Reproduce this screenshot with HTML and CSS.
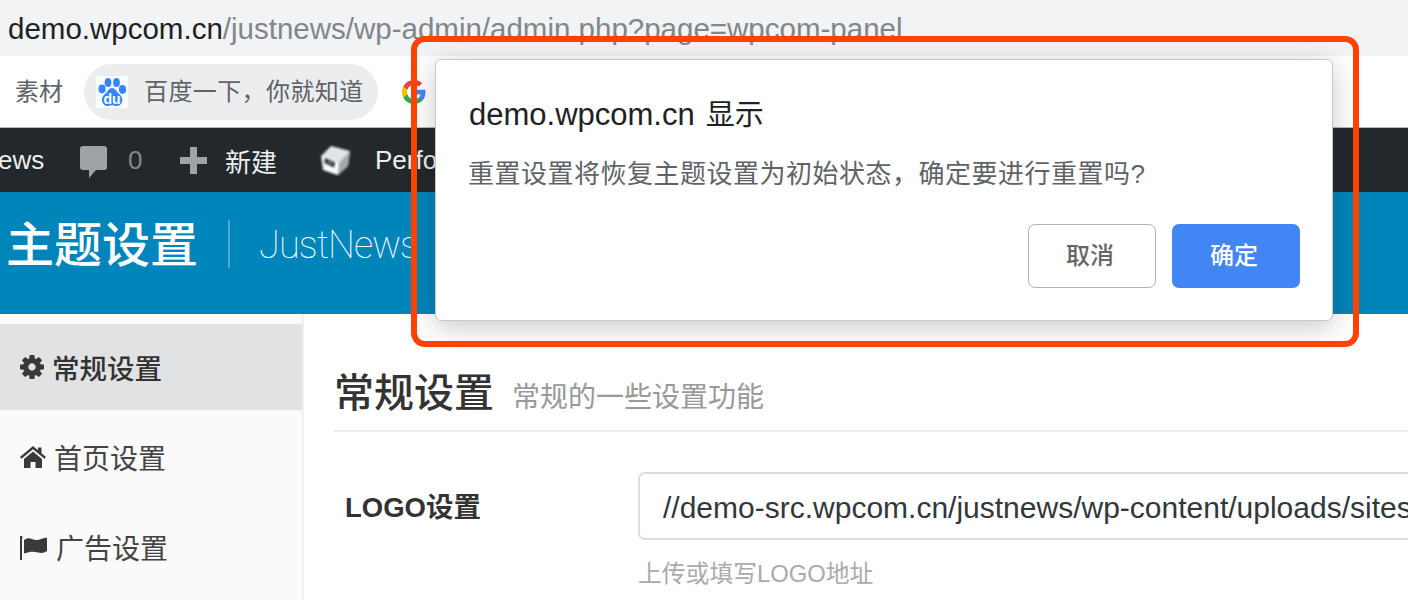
FILE: index.html
```html
<!DOCTYPE html>
<html lang="zh">
<head>
<meta charset="utf-8">
<title>主题设置</title>
<link rel="stylesheet" href="styles.css">
</head>
<body>
<div class="url-bar"><span class="host">demo.wpcom.cn</span><span class="path">/justnews/wp-admin/admin.php?page=wpcom-panel</span></div>
<div class="bookmarks">
  <span class="bm-text">素材</span>
  <div class="pill">
    <span class="baidu"><svg viewBox="0 0 32 32" width="32" height="32"><rect width="32" height="32" fill="#fff"/><g fill="#3388ff"><ellipse cx="6" cy="13" rx="3.600" ry="4.400"/><ellipse cx="12" cy="6.500" rx="3.400" ry="4.500"/><ellipse cx="20.500" cy="6.500" rx="3.400" ry="4.500"/><ellipse cx="26.500" cy="13.500" rx="3.600" ry="4.400"/><path d="M16 12c-3 0-4 3-6 5-2 2-4.500 4-4 7.500C6.500 28 9.500 30.500 12 30c2-.4 2.500-.8 4-.8s2 .4 4 .8c2.800.5 6-2 6.300-5.500.4-3.500-2-5.500-4-7.500-2-2-3.300-5-6.300-5z"/></g><text x="16" y="27.500" class="du">du</text></svg></span>
    <span class="pill-text">百度一下，你就知道</span>
  </div>
  <svg class="google" viewBox="0 0 24 24" width="24" height="24"><path fill="#4285f4" d="M23.500 12.300c0-.9-.1-1.700-.2-2.500H12v4.700h6.500c-.3 1.500-1.100 2.700-2.400 3.600v3h3.900c2.300-2.100 3.500-5.200 3.500-8.800z"/><path fill="#34a853" d="M12 24c3.200 0 6-1.100 8-2.900l-3.900-3c-1.100.7-2.500 1.200-4.100 1.200-3.100 0-5.800-2.100-6.700-5H1.300v3.100C3.300 21.300 7.300 24 12 24z"/><path fill="#fbbc05" d="M5.300 14.300c-.5-1.500-.5-3.100 0-4.600V6.600h-4a12 12 0 0 0 0 10.800z"/><path fill="#ea4335" d="M12 4.800c1.800 0 3.300.6 4.600 1.800L20 3.200C17.900 1.200 15.200 0 12 0 7.300 0 3.300 2.700 1.300 6.600l4 3.100c.9-2.800 3.600-4.900 6.700-4.900z"/></svg>
</div>
<div class="admin-bar">
  <span class="ab-site">ews</span>
  <svg class="ab-bubble" viewBox="0 0 27 32" width="27" height="32"><path fill="#9ea3a8" d="M3 0h21a3 3 0 0 1 3 3v18a3 3 0 0 1-3 3h-8l-7 8v-8H3a3 3 0 0 1-3-3V3a3 3 0 0 1 3-3z"/></svg>
  <span class="ab-count">0</span>
  <svg class="ab-plus" viewBox="0 0 27 27" width="27" height="27"><path fill="#9ea3a8" d="M10 0h7v10h10v7H17v10h-7V17H0v-7h10z"/></svg>
  <span class="ab-new">新建</span>
  <svg class="ab-cube" viewBox="0 0 32 32" width="32" height="32"><path fill="#e4e4e4" d="M11 2l19 5-2 15-10 9-15-5L1 12z"/><path fill="#fafafa" d="M2 12l17 7-1 12-14-5z"/><path fill="#a8a8a8" d="M19 19l11-12-2 15-10 9z"/><path fill="#1e2226" d="M5 14l10 4.500-1 5L4.500 19z"/><path fill="#9a9a9a" d="M7 16.500l6 2.700-.3 1.500-5.700-2.500z"/></svg>
  <span class="ab-perf">Performance</span>
</div>
<header class="banner">
  <h1 class="banner-title">主题设置</h1>
  <span class="banner-name">JustNews</span>
</header>
<div class="layout">
  <nav class="sidebar">
    <a class="nav-item active"><svg class="ni-icon" viewBox="-12 -12 24 24" width="24" height="24"><g fill="#3a3a3a"><circle r="6.200" fill="none" stroke="#3a3a3a" stroke-width="5"/><path d="M-3-7.500L-2.300-12H2.300L3-7.500Z"/><path transform="rotate(45)" d="M-3-7.500L-2.300-12H2.300L3-7.500Z"/><path transform="rotate(90)" d="M-3-7.500L-2.300-12H2.300L3-7.500Z"/><path transform="rotate(135)" d="M-3-7.500L-2.300-12H2.300L3-7.500Z"/><path transform="rotate(180)" d="M-3-7.500L-2.300-12H2.300L3-7.500Z"/><path transform="rotate(225)" d="M-3-7.500L-2.300-12H2.300L3-7.500Z"/><path transform="rotate(270)" d="M-3-7.500L-2.300-12H2.300L3-7.500Z"/><path transform="rotate(315)" d="M-3-7.500L-2.300-12H2.300L3-7.500Z"/></g></svg><span>常规设置</span></a>
    <a class="nav-item"><svg class="ni-icon" viewBox="0 0 26 22" width="26" height="22"><path fill="#3a3a3a" d="M13 0l5 4.300V1.500h3.500v5.800L26 11l-1.500 1.800L13 3.300 1.500 12.800 0 11zM4 13l9-7.500 9 7.500v9h-6.500v-6h-5v6H4z"/></svg><span>首页设置</span></a>
    <a class="nav-item"><svg class="ni-icon flag" viewBox="0 0 28 24" width="28" height="24"><path fill="#3a3a3a" d="M1 0a1.500 1.500 0 0 1 1 2.700V24H0V2.700A1.500 1.500 0 0 1 1 0zM4 4c3-2 5-2 8-1s5 1.500 9 0 6-1.500 6-1v13c-3 2-5 2.500-9 1.500s-7-1.500-14 1z"/></svg><span>广告设置</span></a>
  </nav>
  <main class="content">
    <div class="heading"><h2 class="heading-title">常规设置</h2><span class="heading-sub">常规的一些设置功能</span></div>
    <div class="field">
      <label class="field-label">LOGO设置</label>
      <div class="field-body">
        <div class="input">//demo-src.wpcom.cn/justnews/wp-content/uploads/sites/3/2019/logo.png</div>
        <p class="hint">上传或填写LOGO地址</p>
      </div>
    </div>
  </main>
</div>
<div class="dialog">
  <div class="dialog-title"><span class="dialog-host">demo.wpcom.cn</span> 显示</div>
  <div class="dialog-msg">重置设置将恢复主题设置为初始状态，确定要进行重置吗?</div>
  <div class="dialog-actions">
    <button class="btn btn-cancel">取消</button>
    <button class="btn btn-ok">确定</button>
  </div>
</div>
<div class="red-frame"></div>
</body>
</html>
```
FILE: styles.css
```css
* { box-sizing: border-box; }
html, body { margin: 0; height: 600px; overflow: hidden; }
body { width: 1408px; background: #fff; font-family: "Liberation Sans", "Noto Sans CJK SC", sans-serif; position: relative; }

.url-bar { height: 56px; background: #f1f3f4; padding: 12px 0 0 8px; font-size: 29.500px; line-height: 34px; white-space: nowrap; overflow: hidden; }
.host { color: #202124; }
.path { color: #80868b; }

.bookmarks { height: 72px; border-bottom: 1px solid #b8b8b8; background: #fff; display: flex; align-items: center; padding: 0 0 0 15px; }
.bm-text { font-size: 24px; color: #5f6368; width: 47px; white-space: nowrap; padding-bottom: 4px; }
.pill { margin-left: 22px; width: 294px; height: 56px; background: #ecedee; border-radius: 28px; display: flex; align-items: center; padding-left: 12px; }
.baidu { width: 32px; height: 32px; display: block; }
.baidu svg { display: block; }
.du { font: bold 14px "Liberation Sans", sans-serif; fill: #fff; text-anchor: middle; }
.pill-text { margin-left: 16px; font-size: 24px; color: #5f6368; letter-spacing: .4px; white-space: nowrap; padding-bottom: 4px; }
.google { margin-left: 24px; }

.admin-bar { height: 64px; background: #23282d; display: flex; align-items: center; overflow: hidden; white-space: nowrap; font-size: 26px; color: #eee; }
.ab-site { margin-left: -2px; width: 82px; }
.ab-bubble { margin-top: 4px; }
.ab-count { margin-left: 21px; width: 14px; color: #82878c; }
.ab-plus { margin-left: 38px; }
.ab-new { margin-left: 18px; width: 52px; }
.ab-cube { margin-left: 43px; filter: blur(1px); }
.ab-perf { margin-left: 23px; }

.banner { height: 122px; background: #0085ba; display: flex; align-items: center; color: #fff; padding: 0 0 18px 6px; }
.banner-title { margin: 0; width: 223px; font-size: 48px; line-height: 50px; font-weight: 500; white-space: nowrap; display: flex; align-items: center; height: 48px; padding-top: 4px; position: relative; }
.banner-title::after { content: ""; position: absolute; left: 222px; top: 0; width: 2px; height: 48px; background: rgba(255,255,255,.3); }
.banner-name { margin-left: 30px; padding-top: 2px; font-family: Roboto, sans-serif; font-weight: 100; font-size: 38px; letter-spacing: -.9px; white-space: nowrap; }

.layout { display: grid; grid-template-columns: 304px 1fr; height: 286px; }
.sidebar { background: #fafafa; border-right: 2px solid #f0f0f0; padding-top: 10px; display: flex; flex-direction: column; gap: 4px; }
.nav-item { height: 86px; display: flex; align-items: center; padding-left: 20px; font-size: 28px; color: #444; gap: 8px; white-space: nowrap; }
.nav-item.active { background: #e1e2e4; color: #333; font-weight: 500; font-size: 27.500px; gap: 8px; }
.ni-icon { flex: none; }
.flag { margin-top: 2px; }

.content { padding: 0 0 0 30px; overflow: hidden; }
.heading { margin-top: 50px; height: 68px; border-bottom: 2px solid #eee; display: flex; align-items: flex-start; gap: 18px; white-space: nowrap; }
.heading-title { margin: 0; font-size: 40px; line-height: 58px; font-weight: 500; color: #333; }
.heading-sub { font-size: 28px; line-height: 68px; color: #999; }

.field { display: flex; margin-top: 40px; white-space: nowrap; }
.field-label { width: 304px; flex: none; padding: 18px 0 0 11px; font-size: 27.500px; line-height: 36px; font-weight: 700; color: #333; }
.field-body { width: 900px; flex: none; }
.input { height: 68px; border: 2px solid #ddd; border-radius: 7px; padding-left: 23px; font-size: 30px; line-height: 68px; color: #32373c; overflow: hidden; }
.hint { margin: 18px 0 0; font-size: 23.800px; line-height: 32px; color: #aaa; }

.dialog { position: absolute; left: 435px; top: 59px; width: 898px; height: 262px; background: #fff; border: 1px solid #c8c8c8; border-radius: 6px; box-shadow: 0 6px 28px rgba(0,0,0,.22); padding: 35px 32px 0; display: flex; flex-direction: column; }
.dialog-title { font-size: 29px; line-height: 40px; color: #202124; white-space: nowrap; padding-left: 1px; word-spacing: 3px; }
.dialog-host { font-size: 31px; }
.dialog-msg { margin-top: 19px; font-size: 26px; line-height: 40px; color: #5f6368; letter-spacing: .5px; white-space: nowrap; }
.dialog-actions { margin-top: 30px; display: flex; justify-content: flex-end; gap: 16px; }
.btn { width: 128px; height: 64px; border-radius: 7px; font: 500 24px "Liberation Sans", "Noto Sans CJK SC", sans-serif; padding: 0 4px 6px 0; }
.btn-cancel { background: #fff; border: 1px solid #b5b5b5; color: #666; }
.btn-ok { background: #4285f4; border: 0; color: #fff; }

.red-frame { position: absolute; left: 411px; top: 36px; width: 948px; height: 311px; border: 6px solid #ff4200; border-radius: 14px; pointer-events: none; }
```
